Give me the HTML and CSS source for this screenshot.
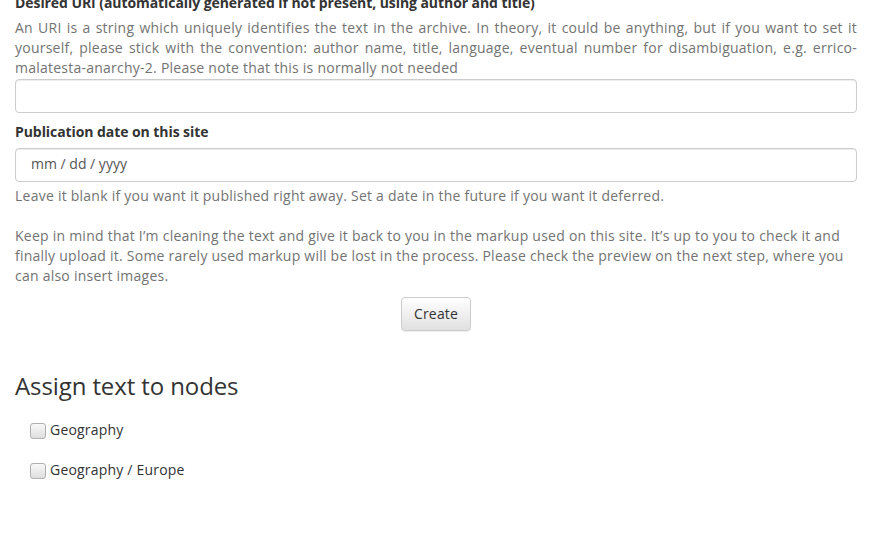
FILE: index.html
```html
<!DOCTYPE html>
<html lang="en">
<head>
<meta charset="utf-8">
<title>New text</title>
<link rel="stylesheet" href="styles.css">
</head>
<body>
<div class="page">
  <form class="form">
    <div class="group first">
      <label class="label" for="uri">Desired URI (automatically generated if not present, using author and title)</label>
      <p class="help justify">An URI is a string which uniquely identifies the text in the archive. In theory, it could be anything, but if you want to set it yourself, please stick with the convention: author name, title, language, eventual number for disambiguation, e.g. errico-malatesta-anarchy-2. Please note that this is normally not needed</p>
      <input class="control" id="uri" type="text">
    </div>
    <div class="group">
      <label class="label" for="pubdate">Publication date on this site</label>
      <input class="control date" id="pubdate" type="text" placeholder="mm / dd / yyyy">
      <p class="help after">Leave it blank if you want it published right away. Set a date in the future if you want it deferred.</p>
    </div>
    <p class="help note">Keep in mind that I’m cleaning the text and give it back to you in the markup used on this site. It’s up to you to check it and finally upload it. Some rarely used markup will be lost in the process. Please check the preview on the next step, where you can also insert images.</p>
    <div class="actions">
      <button class="btn" type="button">Create</button>
    </div>
  </form>
  <h2 class="heading">Assign text to nodes</h2>
  <div class="nodes">
    <label class="node"><input class="check" type="checkbox"> Geography</label>
    <label class="node"><input class="check" type="checkbox"> Geography / Europe</label>
  </div>
</div>
</body>
</html>
```

FILE: styles.css
```css
html, body {
  margin: 0;
  padding: 0;
  background: #fff;
}
body {
  font-family: "Open Sans", "Liberation Sans", sans-serif;
  font-size: 14px;
  line-height: 20px;
  color: #333;
}
.page {
  padding: 0 15px;
}
.form {
  display: flex;
  flex-direction: column;
}
.group {
  display: flex;
  flex-direction: column;
}
.group.first {
  margin-top: -7px;
  margin-bottom: 9px;
}
.label {
  font-weight: 700;
  margin-bottom: 5px;
  display: block;
  letter-spacing: -0.07px;
}
.help {
  margin: 0;
  color: #737373;
  letter-spacing: 0.24px;
}
.justify {
  text-align: justify;
  margin-bottom: 1px;
}
.control {
  box-sizing: border-box;
  height: 34px;
  width: 100%;
  margin: 0;
  padding: 6px 12px;
  font-family: inherit;
  font-size: 14px;
  line-height: 20px;
  color: #555;
  background: #fff;
  border: 1px solid #ccc;
  border-radius: 4px;
  box-shadow: inset 0 1px 1px rgba(0,0,0,0.075);
  outline: none;
}
.control.date {
  padding: 4px 15px 8px;
  margin-top: 1px;
}
.control.date::placeholder {
  color: #555;
  opacity: 1;
}
.help.after {
  margin-top: 4px;
}
.help.note {
  margin-top: 20px;
}
.actions {
  display: flex;
  justify-content: center;
  margin-top: 11px;
}
.btn {
  box-sizing: border-box;
  height: 34px;
  padding: 6px 12px;
  font-family: inherit;
  font-size: 14px;
  line-height: 20px;
  letter-spacing: 0.15px;
  color: #333;
  background: linear-gradient(to bottom, #fff 0%, #e0e0e0 100%);
  border: 1px solid #ccc;
  border-radius: 4px;
  box-shadow: inset 0 1px 0 rgba(255,255,255,0.15), 0 1px 1px rgba(0,0,0,0.075);
  cursor: pointer;
}
.heading {
  font-size: 24px;
  font-weight: 400;
  line-height: 28px;
  margin: 41px 0 0;
  color: #333;
  letter-spacing: -0.1px;
}
.nodes {
  display: flex;
  flex-direction: column;
  gap: 20px;
  padding-left: 15px;
  margin-top: 20px;
}
.node {
  display: flex;
  align-items: center;
  gap: 4px;
  height: 20px;
  letter-spacing: 0.2px;
}
.check {
  appearance: none;
  -webkit-appearance: none;
  box-sizing: border-box;
  width: 16px;
  height: 16px;
  margin: 1px 0 0;
  border: 1px solid #b0b0b0;
  border-radius: 3px;
  background: linear-gradient(to bottom, #f8f8f8, #dedede);
}
```
